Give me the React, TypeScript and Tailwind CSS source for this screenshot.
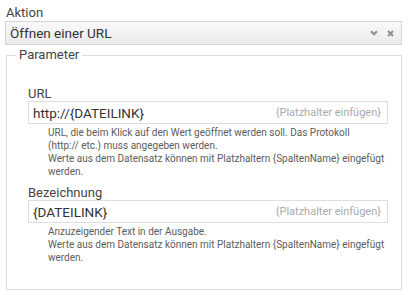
import React from "react";

interface FieldProps {
  label: string;
  value: string;
  help: React.ReactNode;
}

const Field = ({ label, value, help }: FieldProps) => {
  return (
    <div className="flex flex-col">
      <label className="text-[13px] leading-[15px] text-[#444]">{label}</label>
      <div className="flex h-[23px] w-[360px] items-center justify-between border border-[#dedede] bg-white pl-[4px] pr-[6px]">
        <span className="text-[13.5px] leading-[18px] text-[#333]">{value}</span>
        <span className="text-[11px] leading-[14px] text-[#aaa]">{"{Platzhalter einfügen}"}</span>
      </div>
      <p className="mt-[2px] ml-[20px] whitespace-nowrap text-[10px] leading-[13px] text-[#5c5c5c]">
        {help}
      </p>
    </div>
  );
};

export default function App() {
  return (
    <div className="h-[295px] w-[410px] overflow-hidden bg-white pt-[4px] font-['Roboto','Open_Sans',sans-serif] text-[#444]">
      <div className="pl-[6px] text-[13px] leading-[17px]">Aktion</div>

      <div className="ml-[5px] flex h-[24px] w-[397px] items-center justify-between border border-[#d6d6d6] bg-linear-to-b from-[#f9f9f9] to-[#ebebeb] pl-[4px] pr-[7px]">
        <span className="text-[13.5px] text-[#333]">Öffnen einer URL</span>
        <div className="flex items-center gap-[9px]">
          <svg width="8" height="6" viewBox="0 0 8 6">
            <path d="M1 1.2 L4 4.2 L7 1.2" fill="none" stroke="#8f8f8f" strokeWidth="2.2" />
          </svg>
          <svg width="7" height="7" viewBox="0 0 7 7">
            <path d="M1 1 L6 6 M6 1 L1 6" fill="none" stroke="#8f8f8f" strokeWidth="2" />
          </svg>
        </div>
      </div>

      <fieldset className="ml-[6px] mt-[2px] h-[243px] w-[396px] border border-[#dcdcdc]">
        <legend className="ml-[9px] px-[3px] text-[13px] leading-[16px] text-[#444]">Parameter</legend>

        <div className="pl-[21px] pt-[23px]">
          <Field
            label="URL"
            value="http://{DATEILINK}"
            help={
              <>
                URL, die beim Klick auf den Wert geöffnet werden soll. Das Protokoll
                <br />
                (http:// etc.) muss angegeben werden.
                <br />
                Werte aus dem Datensatz können mit Platzhaltern {"{SpaltenName}"} eingefügt
                <br />
                werden.
              </>
            }
          />

          <div className="mt-[7px]">
            <Field
              label="Bezeichnung"
              value="{DATEILINK}"
              help={
                <>
                  Anzuzeigender Text in der Ausgabe.
                  <br />
                  Werte aus dem Datensatz können mit Platzhaltern {"{SpaltenName}"} eingefügt
                  <br />
                  werden.
                </>
              }
            />
          </div>
        </div>
      </fieldset>
    </div>
  );
}
